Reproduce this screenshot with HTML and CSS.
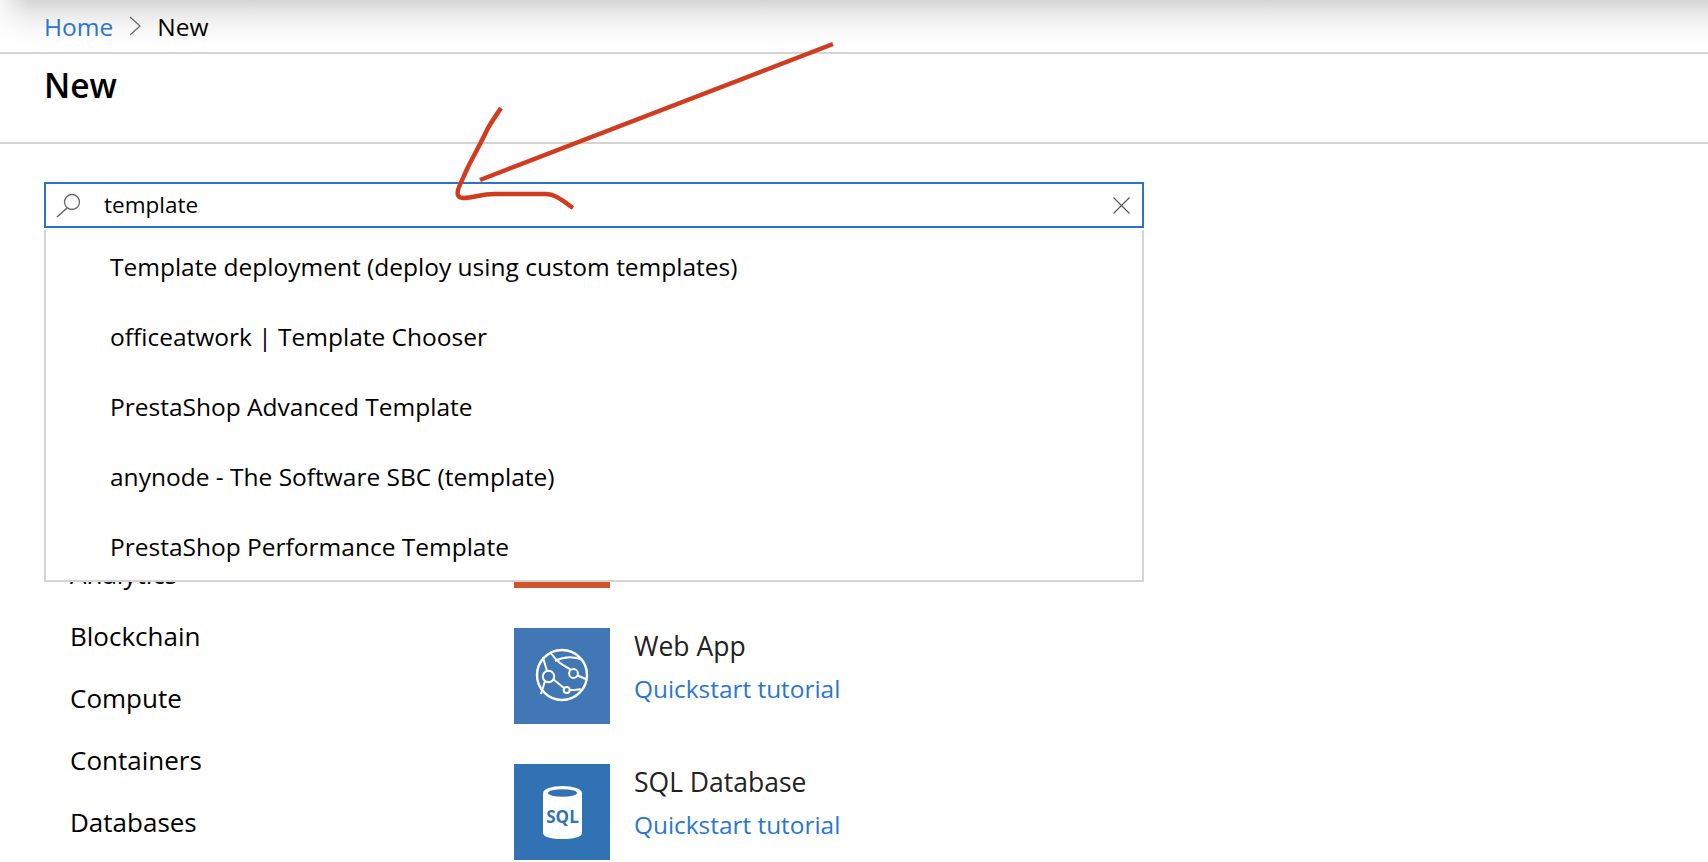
FILE: index.html
```html
<!DOCTYPE html>
<html lang="en">
<head>
<meta charset="utf-8">
<title>New</title>
<link rel="stylesheet" href="styles.css">
</head>
<body>
<nav class="crumbs">
  <a class="link" href="#">Home</a>
  <svg class="chevron" width="12" height="20" viewBox="0 0 12 20"><path d="M1 1l10 9-10 9" fill="none" stroke="#666" stroke-width="1.2"/></svg>
  <span>New</span>
</nav>
<header class="title-bar"><h1 class="title">New</h1></header>
<main class="page">
  <div class="search">
    <div class="search-box">
      <svg class="search-icon" width="28" height="28" viewBox="0 0 28 28"><circle cx="17" cy="11" r="7.5" fill="none" stroke="#666" stroke-width="1.3"/><path d="M12 17L2 26" stroke="#666" stroke-width="1.6" fill="none"/></svg>
      <span class="query">template</span>
      <svg class="clear-icon" width="17" height="17" viewBox="0 0 17 17"><path d="M.5.5l16 16M16.5.5l-16 16" stroke="#555" stroke-width="1.1" fill="none"/></svg>
    </div>
    <ul class="results">
      <li>Template deployment (deploy using custom templates)</li>
      <li>officeatwork | Template Chooser</li>
      <li>PrestaShop Advanced Template</li>
      <li>anynode - The Software SBC (template)</li>
      <li>PrestaShop Performance Template</li>
    </ul>
  </div>
  <div class="content">
    <ul class="categories">
      <li>Analytics</li>
      <li>Blockchain</li>
      <li>Compute</li>
      <li>Containers</li>
      <li>Databases</li>
    </ul>
    <div class="tiles">
      <div class="tile"><div class="tile-icon tile-orange"></div></div>
      <div class="tile">
        <div class="tile-icon tile-web">
          <svg width="96" height="96" viewBox="0 0 96 96" fill="none" stroke="#fff" stroke-width="2"><circle cx="48" cy="47" r="25" stroke-width="2.4"/><circle cx="34.5" cy="48.5" r="5.7"/><circle cx="59.5" cy="45.5" r="4.4"/><circle cx="52.7" cy="62" r="3"/><path d="M36 24c3 4 6 8 10 11 4 3 8 5 11 7M63.500 47.500l9.500 4M39.500 51.500l10.500 8.500M55.700 62c4 0 8 0 11-1M29 29c1 5 3 10 4 14M31 53l-4 13M41 33c8-4 18-5 28-1"/></svg>
        </div>
        <div class="tile-text"><span class="tile-name">Web App</span><a class="link tile-link" href="#">Quickstart tutorial</a></div>
      </div>
      <div class="tile">
        <div class="tile-icon tile-sql">
          <svg width="96" height="96" viewBox="0 0 96 96"><path d="M29 29c0-4 9-7 19.500-7s19.500 3 19.500 7v40c0 4-9 6-19.500 6s-19.500-2-19.500-6z" fill="#fff"/><ellipse cx="48.500" cy="29" rx="14.500" ry="3.800" fill="#3172b5"/><text class="sql-text" x="48.500" y="59" text-anchor="middle">SQL</text></svg>
        </div>
        <div class="tile-text"><span class="tile-name">SQL Database</span><a class="link tile-link" href="#">Quickstart tutorial</a></div>
      </div>
    </div>
  </div>
</main>
<svg class="markup" width="1708" height="862" viewBox="0 0 1708 862" fill="none" stroke="#d13c20" stroke-width="4.5">
  <path d="M833 44L480 180"/>
  <path d="M501 108C495 117 490 124 487 130C482 141 474 155 468 167C465 174 461 182 459 187C456 195 458 198 464 198C474 198 480 194 495 194L546 194C556 194 564 202 573 208"/>
</svg>
</body>
</html>
```
FILE: styles.css
```css
* { box-sizing: border-box; }
html, body { margin: 0; height: 862px; overflow: hidden; }
body {
  position: relative;
  background: #fff;
  color: #000;
  font-family: "Open Sans", "Noto Sans", sans-serif;
  font-size: 24.5px;
}
ul { list-style: none; margin: 0; padding: 0; }
.link { color: #2a76d2; text-decoration: none; }
.crumbs {
  height: 54px;
  padding: 0 0 0 44px;
  display: flex;
  align-items: center;
  gap: 16px;
  border-bottom: 2px solid #d4d4d4;
  background:
    linear-gradient(90deg, rgba(255,255,255,.75), rgba(255,255,255,0) 30px),
    linear-gradient(#d6d6d6 0, #ececec 16px, #f8f8f8 30px, #fff 46px);
}
.title-bar {
  height: 90px;
  padding: 0 0 0 44px;
  border-bottom: 2px solid #d4d4d4;
}
.title { margin: 0; font-size: 33.5px; font-weight: 600; line-height: 62px; }
.page { position: relative; }
.search { position: absolute; left: 44px; top: 38px; width: 1100px; z-index: 2; background: #fff; }
.search-box {
  height: 46px;
  border: 2px solid #2a74c6;
  display: flex;
  align-items: center;
  padding: 0 12px 0 9px;
}
.search-icon { flex: none; }
.query { margin-left: 21px; flex: 1; font-size: 22.5px; line-height: 40px; }
.results { margin-top: 2px; border: 2px solid #d4d4d4; border-top: 0; padding: 2px 0 0 64px; height: 352px; }
.results li { height: 70px; line-height: 70px; }
.content { display: flex; padding-top: 348px; }
.categories { width: 514px; padding: 51px 0 0 70px; font-size: 26px; }
.categories li { height: 62px; line-height: 62px; }
.tiles { display: flex; flex-direction: column; gap: 40px; }
.tile { display: flex; gap: 24px; color: #222; }
.tile-icon { width: 96px; height: 96px; flex: none; }
.tile-orange { background: #d1532c; }
.tile-web { background: #4277b5; }
.tile-sql { background: #3172b5; }
.tile-text { display: flex; flex-direction: column; }
.tile-name { line-height: 36px; font-size: 26.5px; }
.tile-link { line-height: 50px; font-size: 24.4px; }
.sql-text { font: 700 17px "Open Sans", sans-serif; fill: #3172b5; }
.markup { position: absolute; left: 0; top: 0; z-index: 3; pointer-events: none; }
```
